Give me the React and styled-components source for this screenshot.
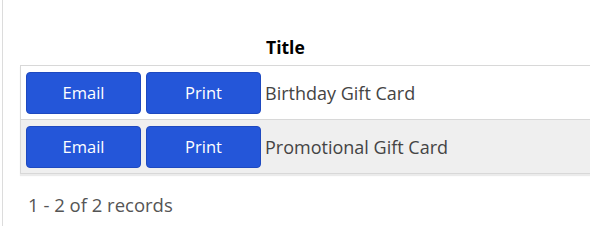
import React from "react";
import styled, { createGlobalStyle } from "styled-components";

const GlobalStyle = createGlobalStyle`
  html, body {
    margin: 0;
    padding: 0;
    background: #fff;
  }
  body {
    font-family: "Open Sans", "Noto Sans", sans-serif;
  }
`;

const Page = styled.div`
  margin-left: 2px;
  border-left: 1px solid #dcdcdc;
  height: 226px;
  padding: 28px 0 0 17px;
  box-sizing: border-box;
  overflow: hidden;
`;

const Grid = styled.div`
  width: 600px;
`;

const Header = styled.div`
  display: grid;
  grid-template-columns: 245px 1fr;
  height: 37px;
  align-items: center;
`;

const HeaderCell = styled.div`
  font-weight: 700;
  font-size: 17.5px;
  color: #000;
  padding-left: 1px;
`;

const Body = styled.div`
  border: 1px solid #d8d8d8;
  box-shadow: 0 2px 1px rgba(0, 0, 0, 0.08);
`;

const Row = styled.div`
  display: flex;
  align-items: center;
  gap: 5px;
  height: 53px;
  padding: 0 5px;
  background: ${(p) => (p.$alt ? "#efefef" : "#fff")};
  & + & {
    border-top: 1px solid #d8d8d8;
  }
`;

const Button = styled.button`
  width: 115px;
  height: 42px;
  background: #2456d9;
  color: #fff;
  border: 1px solid #1e49c0;
  border-radius: 4px;
  font-family: inherit;
  font-size: 16.5px;
  padding: 0;
`;

const Title = styled.span`
  font-size: 18px;
  color: #444;
  margin-left: -1px;
`;

const Pager = styled.div`
  margin-top: 18px;
  padding-left: 8px;
  font-size: 18.5px;
  color: #555;
`;

const rows = ["Birthday Gift Card", "Promotional Gift Card"];

export default function App() {
  return (
    <>
      <GlobalStyle />
      <Page>
        <Grid>
          <Header>
            <div />
            <HeaderCell>Title</HeaderCell>
          </Header>
          <Body>
            {rows.map((t, i) => (
              <Row key={t} $alt={i % 2 === 1}>
                <Button>Email</Button>
                <Button>Print</Button>
                <Title>{t}</Title>
              </Row>
            ))}
          </Body>
        </Grid>
        <Pager>1 - 2 of 2 records</Pager>
      </Page>
    </>
  );
}
